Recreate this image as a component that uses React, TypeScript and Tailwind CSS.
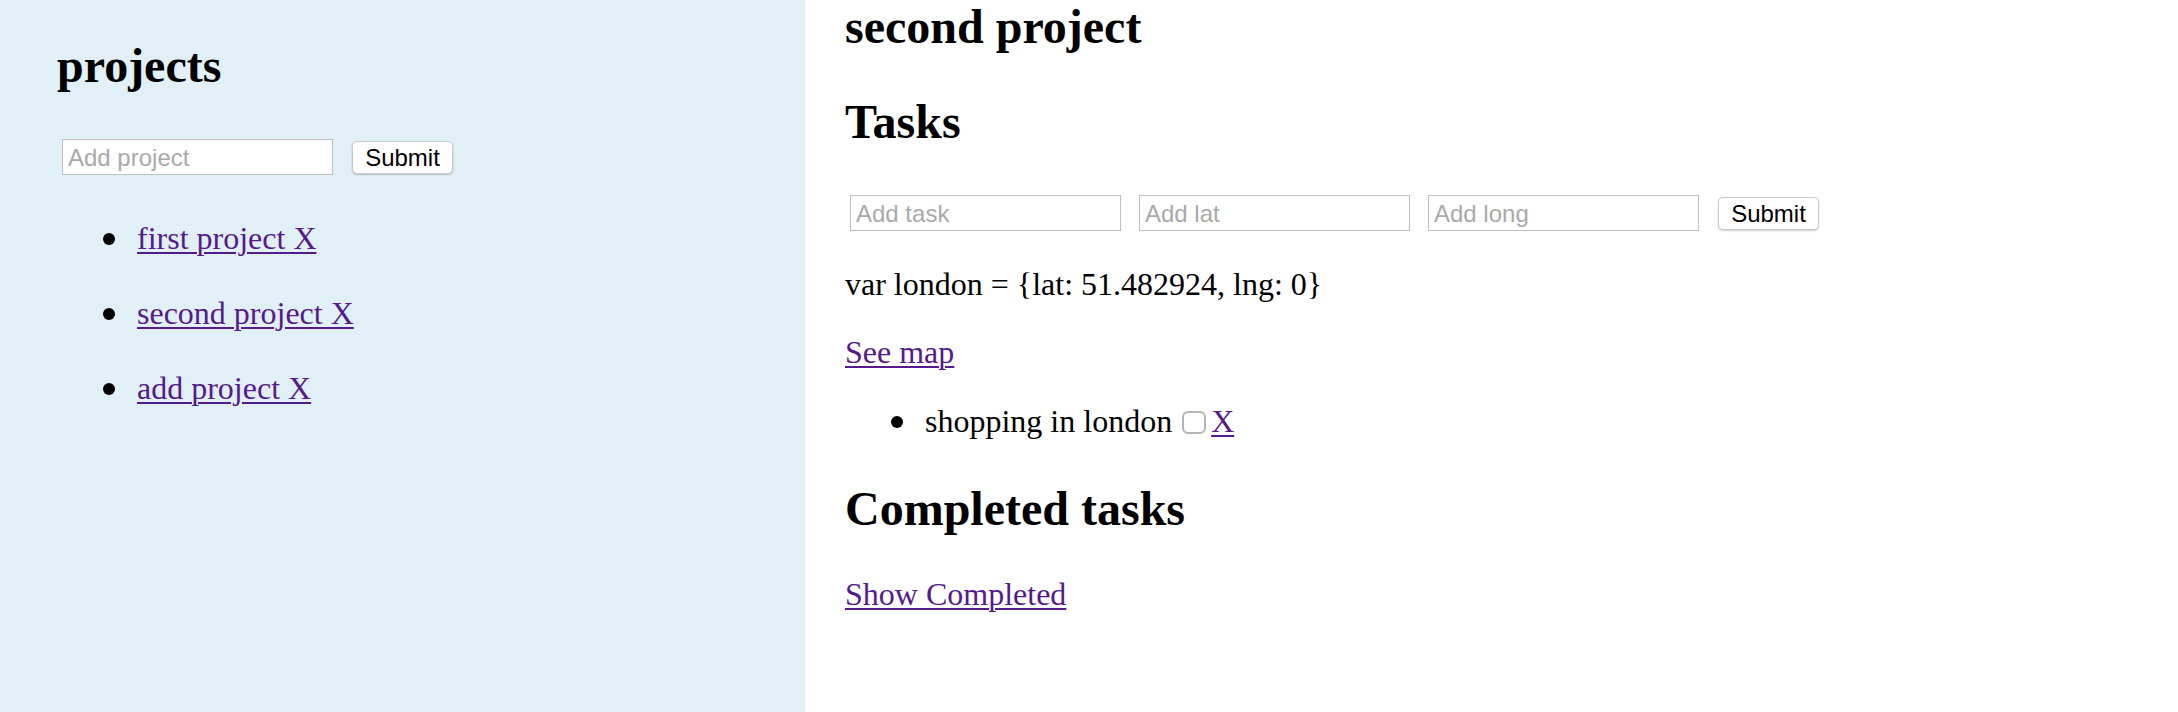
import React from "react";

const linkCls =
  "text-[#551a8b] underline decoration-[2px] underline-offset-[3px]";

const Field = ({ placeholder }: { placeholder: string }) => (
  <input
    placeholder={placeholder}
    className="w-[271px] h-[36px] shrink-0 border border-[#bfbfbf] bg-white px-[5px] pt-[1px] text-[24px] font-['Liberation_Sans',sans-serif] placeholder:text-[#a9a9a9] outline-none"
  />
);

const SubmitButton = () => (
  <button className="w-[101px] h-[33px] shrink-0 ml-[19px] flex items-center justify-center rounded-[5px] border border-[#c9c9c9] bg-white pt-[1px] text-[24px] text-black font-['Liberation_Sans',sans-serif] shadow-[0_1px_2px_rgba(0,0,0,0.2)]">
    Submit
  </button>
);

const Bullet = ({ className }: { className: string }) => (
  <span className={`block w-[12px] h-[12px] rounded-full bg-black shrink-0 ${className}`}></span>
);

const projects = ["first project X", "second project X", "add project X"];

const App = () => {
  return (
    <div className="flex min-h-screen w-full bg-white text-black font-['Liberation_Serif',serif]">
      {/* SIDEBAR */}
      <div className="w-[805px] shrink-0 bg-[#e1f0f6] pt-[39px]">
        <h2 className="ml-[57px] text-[48px] font-bold leading-[54px]">projects</h2>

        <div className="mt-[46px] ml-[62px] flex items-center">
          <Field placeholder="Add project" />
          <SubmitButton />
        </div>

        <ul className="mt-[45px] flex flex-col gap-[38px]">
          {projects.map((p) => (
            <li key={p} className="flex items-center h-[37px] pl-[103px]">
              <Bullet className="mr-[22px]" />
              <a href="#" className={`text-[32px] leading-[37px] ${linkCls}`}>
                {p}
              </a>
            </li>
          ))}
        </ul>
      </div>

      {/* MAIN */}
      <div className="flex-1 pl-[40px]">
        <h2 className="text-[48px] font-bold leading-[54px]">second project</h2>
        <h2 className="mt-[41px] text-[48px] font-bold leading-[54px]">Tasks</h2>

        <div className="mt-[46px] ml-[5px] flex items-center">
          <Field placeholder="Add task" />
          <div className="ml-[18px]">
            <Field placeholder="Add lat" />
          </div>
          <div className="ml-[18px]">
            <Field placeholder="Add long" />
          </div>
          <SubmitButton />
        </div>

        <p className="mt-[35px] text-[32px] leading-[37px]">
          var london = {"{"}lat: 51.482924, lng: 0{"}"}
        </p>

        <a href="#" className={`block w-fit mt-[31px] text-[32px] leading-[37px] ${linkCls}`}>
          See map
        </a>

        <ul className="mt-[32px]">
          <li className="flex items-center h-[37px] pl-[46px]">
            <Bullet className="mr-[22px]" />
            <span className="text-[32px] leading-[37px]">shopping in london</span>
            <span className="block w-[24px] h-[23px] shrink-0 ml-[10px] mr-[5px] mt-[2px] rounded-[6px] border-2 border-[#b5b5b5] bg-white"></span>
            <a href="#" className={`text-[32px] leading-[37px] ${linkCls}`}>
              X
            </a>
          </li>
        </ul>

        <h2 className="mt-[42px] text-[48px] font-bold leading-[54px]">Completed tasks</h2>

        <a href="#" className={`block w-fit mt-[40px] text-[32px] leading-[37px] ${linkCls}`}>
          Show Completed
        </a>
      </div>
    </div>
  );
};

export default App;
